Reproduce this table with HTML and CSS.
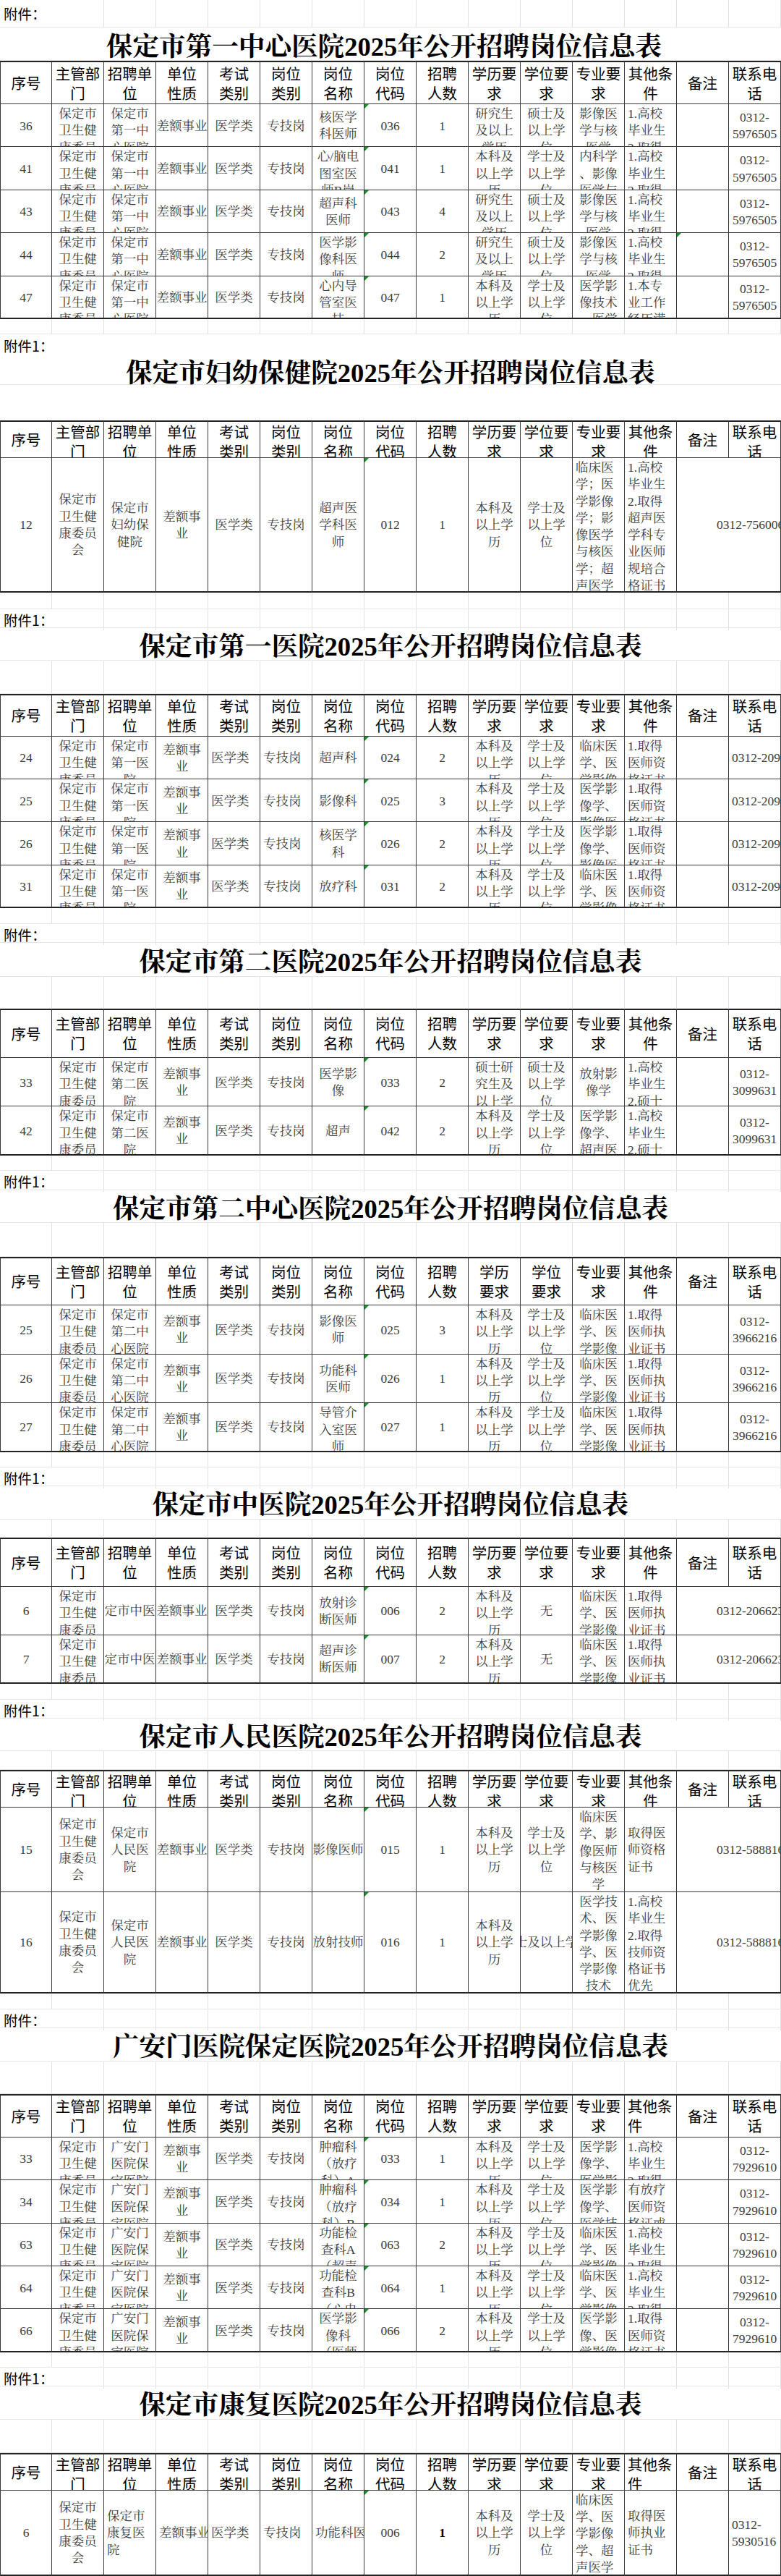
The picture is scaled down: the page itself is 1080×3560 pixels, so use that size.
FILE: index.html
```html
<!DOCTYPE html>
<html lang="zh-CN">
<head>
<meta charset="utf-8">
<title>2025年公开招聘岗位信息表</title>
<link rel="stylesheet" href="styles.css">
</head>
<body>
<div class="page">

<!-- 表1 保定市第一中心医院 -->
<div class="fj h38"><div class="fjt">附件：</div><div class="fjg"></div></div>
<div class="ti ti1 h46">保定市第一中心医院2025年公开招聘岗位信息表</div>
<div class="tr hd h60">
 <div class="c"><span>序号</span></div><div class="c"><span>主管部<br>门</span></div><div class="c"><span>招聘单<br>位</span></div><div class="c"><span>单位<br>性质</span></div><div class="c"><span>考试<br>类别</span></div><div class="c"><span>岗位<br>类别</span></div><div class="c"><span>岗位<br>名称</span></div><div class="c"><span>岗位<br>代码</span></div><div class="c"><span>招聘<br>人数</span></div><div class="c"><span>学历要<br>求</span></div><div class="c"><span>学位要<br>求</span></div><div class="c"><span>专业要<br>求</span></div><div class="c"><span>其他条<br>件</span></div><div class="c"><span>备注</span></div><div class="c"><span>联系电<br>话</span></div>
</div>
<div class="tr r594">
 <div class="c"><span>36</span></div><div class="c"><span>保定市<br>卫生健<br>康委员<br>会</span></div><div class="c"><span>保定市<br>第一中<br>心医院</span></div><div class="c"><span>差额事业</span></div><div class="c"><span>医学类</span></div><div class="c"><span>专技岗</span></div><div class="c"><span>核医学<br>科医师</span></div><div class="c g"><span>036</span></div><div class="c"><span>1</span></div><div class="c"><span>研究生<br>及以上<br>学历</span></div><div class="c"><span>硕士及<br>以上学<br>位</span></div><div class="c"><span>影像医<br>学与核<br>医学</span></div><div class="c l"><span>1.高校<br>毕业生<br>2.取得</span></div><div class="c"></div><div class="c"><span>0312-<br>5976505</span></div>
</div>
<div class="tr r594">
 <div class="c"><span>41</span></div><div class="c"><span>保定市<br>卫生健<br>康委员<br>会</span></div><div class="c"><span>保定市<br>第一中<br>心医院</span></div><div class="c"><span>差额事业</span></div><div class="c"><span>医学类</span></div><div class="c"><span>专技岗</span></div><div class="c"><span>心/脑电<br>图室医<br>师B岗</span></div><div class="c g"><span>041</span></div><div class="c"><span>1</span></div><div class="c"><span>本科及<br>以上学<br>历</span></div><div class="c"><span>学士及<br>以上学<br>位</span></div><div class="c"><span>内科学<br>、影像<br>医学与</span></div><div class="c l"><span>1.高校<br>毕业生<br>2.取得</span></div><div class="c"></div><div class="c"><span>0312-<br>5976505</span></div>
</div>
<div class="tr r594">
 <div class="c"><span>43</span></div><div class="c"><span>保定市<br>卫生健<br>康委员<br>会</span></div><div class="c"><span>保定市<br>第一中<br>心医院</span></div><div class="c"><span>差额事业</span></div><div class="c"><span>医学类</span></div><div class="c"><span>专技岗</span></div><div class="c"><span>超声科<br>医师</span></div><div class="c g"><span>043</span></div><div class="c"><span>4</span></div><div class="c"><span>研究生<br>及以上<br>学历</span></div><div class="c"><span>硕士及<br>以上学<br>位</span></div><div class="c"><span>影像医<br>学与核<br>医学</span></div><div class="c l"><span>1.高校<br>毕业生<br>2.取得</span></div><div class="c"></div><div class="c"><span>0312-<br>5976505</span></div>
</div>
<div class="tr r594">
 <div class="c"><span>44</span></div><div class="c"><span>保定市<br>卫生健<br>康委员<br>会</span></div><div class="c"><span>保定市<br>第一中<br>心医院</span></div><div class="c"><span>差额事业</span></div><div class="c"><span>医学类</span></div><div class="c"><span>专技岗</span></div><div class="c"><span>医学影<br>像科医<br>师</span></div><div class="c g"><span>044</span></div><div class="c"><span>2</span></div><div class="c"><span>研究生<br>及以上<br>学历</span></div><div class="c"><span>硕士及<br>以上学<br>位</span></div><div class="c"><span>影像医<br>学与核<br>医学</span></div><div class="c l"><span>1.高校<br>毕业生<br>2.取得</span></div><div class="c g"></div><div class="c"><span>0312-<br>5976505</span></div>
</div>
<div class="tr r594 last">
 <div class="c"><span>47</span></div><div class="c"><span>保定市<br>卫生健<br>康委员<br>会</span></div><div class="c"><span>保定市<br>第一中<br>心医院</span></div><div class="c"><span>差额事业</span></div><div class="c"><span>医学类</span></div><div class="c"><span>专技岗</span></div><div class="c"><span>心内导<br>管室医<br>技</span></div><div class="c g"><span>047</span></div><div class="c"><span>1</span></div><div class="c"><span>本科及<br>以上学<br>历</span></div><div class="c"><span>学士及<br>以上学<br>位</span></div><div class="c"><span>医学影<br>像技术<br>、医学</span></div><div class="c l"><span>1.本专<br>业工作<br>经历满</span></div><div class="c"></div><div class="c"><span>0312-<br>5976505</span></div>
</div>
<div class="bl h21"></div>

<!-- 表2 保定市妇幼保健院 -->
<div class="fjp">附件1：</div>
<div class="ti h38">保定市妇幼保健院2025年公开招聘岗位信息表</div>
<div class="h49"></div>
<div class="tr hd h52">
 <div class="c"><span>序号</span></div><div class="c"><span>主管部<br>门</span></div><div class="c"><span>招聘单<br>位</span></div><div class="c"><span>单位<br>性质</span></div><div class="c"><span>考试<br>类别</span></div><div class="c"><span>岗位<br>类别</span></div><div class="c"><span>岗位<br>名称</span></div><div class="c"><span>岗位<br>代码</span></div><div class="c"><span>招聘<br>人数</span></div><div class="c"><span>学历要<br>求</span></div><div class="c"><span>学位要<br>求</span></div><div class="c"><span>专业要<br>求</span></div><div class="c"><span>其他条<br>件</span></div><div class="c"><span>备注</span></div><div class="c"><span>联系电<br>话</span></div>
</div>
<div class="tr h186 last">
 <div class="c"><span>12</span></div><div class="c"><span>保定市<br>卫生健<br>康委员<br>会</span></div><div class="c"><span>保定市<br>妇幼保<br>健院</span></div><div class="c"><span>差额事<br>业</span></div><div class="c"><span>医学类</span></div><div class="c"><span>专技岗</span></div><div class="c"><span>超声医<br>学科医<br>师</span></div><div class="c g"><span>012</span></div><div class="c"><span>1</span></div><div class="c"><span>本科及<br>以上学<br>历</span></div><div class="c"><span>学士及<br>以上学<br>位</span></div><div class="c l"><span>临床医<br>学；医<br>学影像<br>学；影<br>像医学<br>与核医<br>学；超<br>声医学</span></div><div class="c l"><span>1.高校<br>毕业生<br>2.取得<br>超声医<br>学科专<br>业医师<br>规培合<br>格证书</span></div><div class="c m2"><span>0312-7560063</span></div>
</div>
<div class="bl h23"></div>

<!-- 表3 保定市第一医院 -->
<div class="fj h26"><div class="fjt">附件1：</div><div class="fjg"></div></div>
<div class="ti h45">保定市第一医院2025年公开招聘岗位信息表</div>
<div class="bl h46"></div>
<div class="tr hd h59">
 <div class="c"><span>序号</span></div><div class="c"><span>主管部<br>门</span></div><div class="c"><span>招聘单<br>位</span></div><div class="c"><span>单位<br>性质</span></div><div class="c"><span>考试<br>类别</span></div><div class="c"><span>岗位<br>类别</span></div><div class="c"><span>岗位<br>名称</span></div><div class="c"><span>岗位<br>代码</span></div><div class="c"><span>招聘<br>人数</span></div><div class="c"><span>学历要<br>求</span></div><div class="c"><span>学位要<br>求</span></div><div class="c"><span>专业要<br>求</span></div><div class="c"><span>其他条<br>件</span></div><div class="c"><span>备注</span></div><div class="c"><span>联系电<br>话</span></div>
</div>
<div class="tr r5925">
 <div class="c"><span>24</span></div><div class="c"><span>保定市<br>卫生健<br>康委员<br>会</span></div><div class="c"><span>保定市<br>第一医<br>院</span></div><div class="c"><span>差额事<br>业</span></div><div class="c l"><span>医学类</span></div><div class="c l"><span>专技岗</span></div><div class="c"><span>超声科</span></div><div class="c g"><span>024</span></div><div class="c"><span>2</span></div><div class="c"><span>本科及<br>以上学<br>历</span></div><div class="c"><span>学士及<br>以上学<br>位</span></div><div class="c"><span>临床医<br>学、医<br>学影像</span></div><div class="c l"><span>1.取得<br>医师资<br>格证书</span></div><div class="c"></div><div class="c l"><span>0312-2096133</span></div>
</div>
<div class="tr r5925">
 <div class="c"><span>25</span></div><div class="c"><span>保定市<br>卫生健<br>康委员<br>会</span></div><div class="c"><span>保定市<br>第一医<br>院</span></div><div class="c"><span>差额事<br>业</span></div><div class="c l"><span>医学类</span></div><div class="c l"><span>专技岗</span></div><div class="c"><span>影像科</span></div><div class="c g"><span>025</span></div><div class="c"><span>3</span></div><div class="c"><span>本科及<br>以上学<br>历</span></div><div class="c"><span>学士及<br>以上学<br>位</span></div><div class="c"><span>医学影<br>像学、<br>影像医</span></div><div class="c l"><span>1.取得<br>医师资<br>格证书</span></div><div class="c"></div><div class="c l"><span>0312-2096133</span></div>
</div>
<div class="tr r5925">
 <div class="c"><span>26</span></div><div class="c"><span>保定市<br>卫生健<br>康委员<br>会</span></div><div class="c"><span>保定市<br>第一医<br>院</span></div><div class="c"><span>差额事<br>业</span></div><div class="c l"><span>医学类</span></div><div class="c l"><span>专技岗</span></div><div class="c"><span>核医学<br>科</span></div><div class="c g"><span>026</span></div><div class="c"><span>2</span></div><div class="c"><span>本科及<br>以上学<br>历</span></div><div class="c"><span>学士及<br>以上学<br>位</span></div><div class="c"><span>医学影<br>像学、<br>影像医</span></div><div class="c l"><span>1.取得<br>医师资<br>格证书</span></div><div class="c"></div><div class="c l"><span>0312-2096133</span></div>
</div>
<div class="tr r5925 last">
 <div class="c"><span>31</span></div><div class="c"><span>保定市<br>卫生健<br>康委员<br>会</span></div><div class="c"><span>保定市<br>第一医<br>院</span></div><div class="c"><span>差额事<br>业</span></div><div class="c l"><span>医学类</span></div><div class="c l"><span>专技岗</span></div><div class="c"><span>放疗科</span></div><div class="c g"><span>031</span></div><div class="c"><span>2</span></div><div class="c"><span>本科及<br>以上学<br>历</span></div><div class="c"><span>学士及<br>以上学<br>位</span></div><div class="c"><span>临床医<br>学、医<br>学影像</span></div><div class="c l"><span>1.取得<br>医师资<br>格证书</span></div><div class="c"></div><div class="c l"><span>0312-2096133</span></div>
</div>
<div class="bl h22"></div>

<!-- 表4 保定市第二医院 -->
<div class="fj h26"><div class="fjt">附件：</div><div class="fjg"></div></div>
<div class="ti h47">保定市第二医院2025年公开招聘岗位信息表</div>
<div class="bl h44"></div>
<div class="tr hd h68">
 <div class="c"><span>序号</span></div><div class="c"><span>主管部<br>门</span></div><div class="c"><span>招聘单<br>位</span></div><div class="c"><span>单位<br>性质</span></div><div class="c"><span>考试<br>类别</span></div><div class="c"><span>岗位<br>类别</span></div><div class="c"><span>岗位<br>名称</span></div><div class="c"><span>岗位<br>代码</span></div><div class="c"><span>招聘<br>人数</span></div><div class="c"><span>学历要<br>求</span></div><div class="c"><span>学位要<br>求</span></div><div class="c"><span>专业要<br>求</span></div><div class="c"><span>其他条<br>件</span></div><div class="c"><span>备注</span></div><div class="c"><span>联系电<br>话</span></div>
</div>
<div class="tr r675">
 <div class="c"><span>33</span></div><div class="c"><span>保定市<br>卫生健<br>康委员<br>会</span></div><div class="c"><span>保定市<br>第二医<br>院</span></div><div class="c"><span>差额事<br>业</span></div><div class="c"><span>医学类</span></div><div class="c"><span>专技岗</span></div><div class="c"><span>医学影<br>像</span></div><div class="c g"><span>033</span></div><div class="c"><span>2</span></div><div class="c"><span>硕士研<br>究生及<br>以上学<br>历</span></div><div class="c"><span>硕士及<br>以上学<br>位</span></div><div class="c"><span>放射影<br>像学</span></div><div class="c l"><span>1.高校<br>毕业生<br>2.硕士</span></div><div class="c"></div><div class="c"><span>0312-<br>3099631</span></div>
</div>
<div class="tr r675 last">
 <div class="c"><span>42</span></div><div class="c"><span>保定市<br>卫生健<br>康委员<br>会</span></div><div class="c"><span>保定市<br>第二医<br>院</span></div><div class="c"><span>差额事<br>业</span></div><div class="c"><span>医学类</span></div><div class="c"><span>专技岗</span></div><div class="c"><span>超声</span></div><div class="c g"><span>042</span></div><div class="c"><span>2</span></div><div class="c"><span>本科及<br>以上学<br>历</span></div><div class="c"><span>学士及<br>以上学<br>位</span></div><div class="c"><span>医学影<br>像学、<br>超声医</span></div><div class="c l"><span>1.高校<br>毕业生<br>2.硕士</span></div><div class="c"></div><div class="c"><span>0312-<br>3099631</span></div>
</div>
<div class="bl h21"></div>

<!-- 表5 保定市第二中心医院 -->
<div class="fj h27"><div class="fjt">附件1：</div><div class="fjg"></div></div>
<div class="ti h45">保定市第二中心医院2025年公开招聘岗位信息表</div>
<div class="bl h47"></div>
<div class="tr hd h67">
 <div class="c"><span>序号</span></div><div class="c"><span>主管部<br>门</span></div><div class="c"><span>招聘单<br>位</span></div><div class="c"><span>单位<br>性质</span></div><div class="c"><span>考试<br>类别</span></div><div class="c"><span>岗位<br>类别</span></div><div class="c"><span>岗位<br>名称</span></div><div class="c"><span>岗位<br>代码</span></div><div class="c"><span>招聘<br>人数</span></div><div class="c"><span>学历<br>要求</span></div><div class="c"><span>学位<br>要求</span></div><div class="c"><span>专业要<br>求</span></div><div class="c"><span>其他条<br>件</span></div><div class="c"><span>备注</span></div><div class="c"><span>联系电<br>话</span></div>
</div>
<div class="tr r6767">
 <div class="c"><span>25</span></div><div class="c"><span>保定市<br>卫生健<br>康委员<br>会</span></div><div class="c"><span>保定市<br>第二中<br>心医院</span></div><div class="c"><span>差额事<br>业</span></div><div class="c"><span>医学类</span></div><div class="c"><span>专技岗</span></div><div class="c"><span>影像医<br>师</span></div><div class="c g"><span>025</span></div><div class="c"><span>3</span></div><div class="c"><span>本科及<br>以上学<br>历</span></div><div class="c"><span>学士及<br>以上学<br>位</span></div><div class="c"><span>临床医<br>学、医<br>学影像</span></div><div class="c l"><span>1.取得<br>医师执<br>业证书</span></div><div class="c"></div><div class="c"><span>0312-<br>3966216</span></div>
</div>
<div class="tr r6767">
 <div class="c"><span>26</span></div><div class="c"><span>保定市<br>卫生健<br>康委员<br>会</span></div><div class="c"><span>保定市<br>第二中<br>心医院</span></div><div class="c"><span>差额事<br>业</span></div><div class="c"><span>医学类</span></div><div class="c"><span>专技岗</span></div><div class="c"><span>功能科<br>医师</span></div><div class="c g"><span>026</span></div><div class="c"><span>1</span></div><div class="c"><span>本科及<br>以上学<br>历</span></div><div class="c"><span>学士及<br>以上学<br>位</span></div><div class="c"><span>临床医<br>学、医<br>学影像</span></div><div class="c l"><span>1.取得<br>医师执<br>业证书</span></div><div class="c"></div><div class="c"><span>0312-<br>3966216</span></div>
</div>
<div class="tr r6767 last">
 <div class="c"><span>27</span></div><div class="c"><span>保定市<br>卫生健<br>康委员<br>会</span></div><div class="c"><span>保定市<br>第二中<br>心医院</span></div><div class="c"><span>差额事<br>业</span></div><div class="c"><span>医学类</span></div><div class="c"><span>专技岗</span></div><div class="c"><span>导管介<br>入室医<br>师</span></div><div class="c g"><span>027</span></div><div class="c"><span>1</span></div><div class="c"><span>本科及<br>以上学<br>历</span></div><div class="c"><span>学士及<br>以上学<br>位</span></div><div class="c"><span>临床医<br>学、医<br>学影像</span></div><div class="c l"><span>1.取得<br>医师执<br>业证书</span></div><div class="c"></div><div class="c"><span>0312-<br>3966216</span></div>
</div>
<div class="bl h21"></div>

<!-- 表6 保定市中医院 -->
<div class="fj h26"><div class="fjt">附件1：</div><div class="fjg"></div></div>
<div class="ti h46">保定市中医院2025年公开招聘岗位信息表</div>
<div class="bl h25"></div>
<div class="tr hd h68">
 <div class="c"><span>序号</span></div><div class="c"><span>主管部<br>门</span></div><div class="c"><span>招聘单<br>位</span></div><div class="c"><span>单位<br>性质</span></div><div class="c"><span>考试<br>类别</span></div><div class="c"><span>岗位<br>类别</span></div><div class="c"><span>岗位<br>名称</span></div><div class="c"><span>岗位<br>代码</span></div><div class="c"><span>招聘<br>人数</span></div><div class="c"><span>学历要<br>求</span></div><div class="c"><span>学位要<br>求</span></div><div class="c"><span>专业要<br>求</span></div><div class="c"><span>其他条<br>件</span></div><div class="c"><span>备注</span></div><div class="c"><span>联系电<br>话</span></div>
</div>
<div class="tr r67">
 <div class="c"><span>6</span></div><div class="c"><span>保定市<br>卫生健<br>康委员<br>会</span></div><div class="c"><span>保定市中医院</span></div><div class="c"><span>差额事业</span></div><div class="c"><span>医学类</span></div><div class="c"><span>专技岗</span></div><div class="c"><span>放射诊<br>断医师</span></div><div class="c g"><span>006</span></div><div class="c"><span>2</span></div><div class="c"><span>本科及<br>以上学<br>历</span></div><div class="c"><span>无</span></div><div class="c"><span>临床医<br>学、医<br>学影像</span></div><div class="c l"><span>1.取得<br>医师执<br>业证书</span></div><div class="c m2"><span>0312-2066233</span></div>
</div>
<div class="tr r67 last">
 <div class="c"><span>7</span></div><div class="c"><span>保定市<br>卫生健<br>康委员<br>会</span></div><div class="c"><span>保定市中医院</span></div><div class="c"><span>差额事业</span></div><div class="c"><span>医学类</span></div><div class="c"><span>专技岗</span></div><div class="c"><span>超声诊<br>断医师</span></div><div class="c g"><span>007</span></div><div class="c"><span>2</span></div><div class="c"><span>本科及<br>以上学<br>历</span></div><div class="c"><span>无</span></div><div class="c"><span>临床医<br>学、医<br>学影像</span></div><div class="c l"><span>1.取得<br>医师执<br>业证书</span></div><div class="c m2"><span>0312-2066233</span></div>
</div>
<div class="bl h22"></div>

<!-- 表7 保定市人民医院 -->
<div class="fj h26"><div class="fjt">附件1：</div><div class="fjg"></div></div>
<div class="ti h45">保定市人民医院2025年公开招聘岗位信息表</div>
<div class="bl h26"></div>
<div class="tr hd h52">
 <div class="c"><span>序号</span></div><div class="c"><span>主管部<br>门</span></div><div class="c"><span>招聘单<br>位</span></div><div class="c"><span>单位<br>性质</span></div><div class="c"><span>考试<br>类别</span></div><div class="c"><span>岗位<br>类别</span></div><div class="c"><span>岗位<br>名称</span></div><div class="c"><span>岗位<br>代码</span></div><div class="c"><span>招聘<br>人数</span></div><div class="c"><span>学历要<br>求</span></div><div class="c"><span>学位要<br>求</span></div><div class="c"><span>专业要<br>求</span></div><div class="c"><span>其他条<br>件</span></div><div class="c"><span>备注</span></div><div class="c"><span>联系电<br>话</span></div>
</div>
<div class="tr h117">
 <div class="c"><span>15</span></div><div class="c"><span>保定市<br>卫生健<br>康委员<br>会</span></div><div class="c"><span>保定市<br>人民医<br>院</span></div><div class="c"><span>差额事业</span></div><div class="c"><span>医学类</span></div><div class="c"><span>专技岗</span></div><div class="c"><span>影像医师</span></div><div class="c g"><span>015</span></div><div class="c"><span>1</span></div><div class="c"><span>本科及<br>以上学<br>历</span></div><div class="c"><span>学士及<br>以上学<br>位</span></div><div class="c"><span>临床医<br>学、影<br>像医师<br>与核医<br>学</span></div><div class="c l"><span>取得医<br>师资格<br>证书</span></div><div class="c m2"><span>0312-5888166</span></div>
</div>
<div class="tr h140 last">
 <div class="c"><span>16</span></div><div class="c"><span>保定市<br>卫生健<br>康委员<br>会</span></div><div class="c"><span>保定市<br>人民医<br>院</span></div><div class="c"><span>差额事业</span></div><div class="c"><span>医学类</span></div><div class="c"><span>专技岗</span></div><div class="c"><span>放射技师</span></div><div class="c g"><span>016</span></div><div class="c"><span>1</span></div><div class="c"><span>本科及<br>以上学<br>历</span></div><div class="c"><span>学士及以上学位</span></div><div class="c"><span>医学技<br>术、医<br>学影像<br>学、医<br>学影像<br>技术</span></div><div class="c l"><span>1.高校<br>毕业生<br>2.取得<br>技师资<br>格证书<br>优先</span></div><div class="c m2"><span>0312-5888166</span></div>
</div>
<div class="bl h22"></div>

<!-- 表8 广安门医院保定医院 -->
<div class="fj h26"><div class="fjt">附件：</div><div class="fjg"></div></div>
<div class="ti h46">广安门医院保定医院2025年公开招聘岗位信息表</div>
<div class="bl h45"></div>
<div class="tr hd h60">
 <div class="c"><span>序号</span></div><div class="c"><span>主管部<br>门</span></div><div class="c"><span>招聘单<br>位</span></div><div class="c"><span>单位<br>性质</span></div><div class="c"><span>考试<br>类别</span></div><div class="c"><span>岗位<br>类别</span></div><div class="c"><span>岗位<br>名称</span></div><div class="c"><span>岗位<br>代码</span></div><div class="c"><span>招聘<br>人数</span></div><div class="c"><span>学历要<br>求</span></div><div class="c"><span>学位要<br>求</span></div><div class="c"><span>专业要<br>求</span></div><div class="c hl"><span>其他条<br>件</span></div><div class="c"><span>备注</span></div><div class="c"><span>联系电<br>话</span></div>
</div>
<div class="tr r594">
 <div class="c"><span>33</span></div><div class="c"><span>保定市<br>卫生健<br>康委员<br>会</span></div><div class="c"><span>广安门<br>医院保<br>定医院</span></div><div class="c"><span>差额事<br>业</span></div><div class="c"><span>医学类</span></div><div class="c"><span>专技岗</span></div><div class="c"><span>肿瘤科<br>（放疗<br>科）A</span></div><div class="c g"><span>033</span></div><div class="c"><span>1</span></div><div class="c"><span>本科及<br>以上学<br>历</span></div><div class="c"><span>学士及<br>以上学<br>位</span></div><div class="c"><span>医学影<br>像学、<br>医学影</span></div><div class="c l"><span>1.高校<br>毕业生<br>2.取得</span></div><div class="c"></div><div class="c"><span>0312-<br>7929610</span></div>
</div>
<div class="tr r594">
 <div class="c"><span>34</span></div><div class="c"><span>保定市<br>卫生健<br>康委员<br>会</span></div><div class="c"><span>广安门<br>医院保<br>定医院</span></div><div class="c"><span>差额事<br>业</span></div><div class="c"><span>医学类</span></div><div class="c"><span>专技岗</span></div><div class="c"><span>肿瘤科<br>（放疗<br>科）B</span></div><div class="c g"><span>034</span></div><div class="c"><span>1</span></div><div class="c"><span>本科及<br>以上学<br>历</span></div><div class="c"><span>学士及<br>以上学<br>位</span></div><div class="c"><span>医学影<br>像学、<br>医学技</span></div><div class="c l"><span>有放疗<br>医师资<br>格证或</span></div><div class="c"></div><div class="c"><span>0312-<br>7929610</span></div>
</div>
<div class="tr r594">
 <div class="c"><span>63</span></div><div class="c"><span>保定市<br>卫生健<br>康委员<br>会</span></div><div class="c"><span>广安门<br>医院保<br>定医院</span></div><div class="c"><span>差额事<br>业</span></div><div class="c"><span>医学类</span></div><div class="c"><span>专技岗</span></div><div class="c"><span>功能检<br>查科A<br>（超声</span></div><div class="c g"><span>063</span></div><div class="c"><span>2</span></div><div class="c"><span>本科及<br>以上学<br>历</span></div><div class="c"><span>学士及<br>以上学<br>位</span></div><div class="c"><span>临床医<br>学、医<br>学影像</span></div><div class="c l"><span>1.高校<br>毕业生<br>2.取得</span></div><div class="c"></div><div class="c"><span>0312-<br>7929610</span></div>
</div>
<div class="tr r594">
 <div class="c"><span>64</span></div><div class="c"><span>保定市<br>卫生健<br>康委员<br>会</span></div><div class="c"><span>广安门<br>医院保<br>定医院</span></div><div class="c"><span>差额事<br>业</span></div><div class="c"><span>医学类</span></div><div class="c"><span>专技岗</span></div><div class="c"><span>功能检<br>查科B<br>（心电</span></div><div class="c g"><span>064</span></div><div class="c"><span>1</span></div><div class="c"><span>本科及<br>以上学<br>历</span></div><div class="c"><span>学士及<br>以上学<br>位</span></div><div class="c"><span>临床医<br>学、医<br>学影像</span></div><div class="c l"><span>1.高校<br>毕业生<br>2.取得</span></div><div class="c"></div><div class="c"><span>0312-<br>7929610</span></div>
</div>
<div class="tr r594 last">
 <div class="c"><span>66</span></div><div class="c"><span>保定市<br>卫生健<br>康委员<br>会</span></div><div class="c"><span>广安门<br>医院保<br>定医院</span></div><div class="c"><span>差额事<br>业</span></div><div class="c"><span>医学类</span></div><div class="c"><span>专技岗</span></div><div class="c"><span>医学影<br>像科<br>（医师</span></div><div class="c g"><span>066</span></div><div class="c"><span>2</span></div><div class="c"><span>本科及<br>以上学<br>历</span></div><div class="c"><span>学士及<br>以上学<br>位</span></div><div class="c"><span>医学影<br>像、医<br>学影像</span></div><div class="c l"><span>1.取得<br>医师资<br>格证书</span></div><div class="c"></div><div class="c"><span>0312-<br>7929610</span></div>
</div>
<div class="bl h21"></div>

<!-- 表9 保定市康复医院 -->
<div class="fj h26"><div class="fjt">附件1：</div><div class="fjg"></div></div>
<div class="ti h46">保定市康复医院2025年公开招聘岗位信息表</div>
<div class="bl h46"></div>
<div class="tr hd h52">
 <div class="c"><span>序号</span></div><div class="c"><span>主管部<br>门</span></div><div class="c"><span>招聘单<br>位</span></div><div class="c"><span>单位<br>性质</span></div><div class="c"><span>考试<br>类别</span></div><div class="c"><span>岗位<br>类别</span></div><div class="c"><span>岗位<br>名称</span></div><div class="c"><span>岗位<br>代码</span></div><div class="c"><span>招聘<br>人数</span></div><div class="c"><span>学历要<br>求</span></div><div class="c"><span>学位要<br>求</span></div><div class="c"><span>专业要<br>求</span></div><div class="c hl"><span>其他条<br>件</span></div><div class="c"><span>备注</span></div><div class="c"><span>联系电<br>话</span></div>
</div>
<div class="tr h118 last">
 <div class="c"><span>6</span></div><div class="c"><span>保定市<br>卫生健<br>康委员<br>会</span></div><div class="c l"><span>保定市<br>康复医<br>院</span></div><div class="c l"><span>差额事业</span></div><div class="c l"><span>医学类</span></div><div class="c l"><span>专技岗</span></div><div class="c l"><span>功能科医师</span></div><div class="c g"><span>006</span></div><div class="c b"><span>1</span></div><div class="c"><span>本科及<br>以上学<br>历</span></div><div class="c"><span>学士及<br>以上学<br>位</span></div><div class="c l"><span>临床医<br>学、医<br>学影像<br>学、超<br>声医学</span></div><div class="c l"><span>取得医<br>师执业<br>证书</span></div><div class="c"></div><div class="c l"><span>0312-<br>5930516</span></div>
</div>

</div>
</body>
</html>
```

FILE: styles.css
```css
* { box-sizing: border-box; }

html, body {
  margin: 0;
  padding: 0;
  background: #ffffff;
  overflow-x: hidden;
}

body {
  width: 1080px;
  font-family: "Noto Sans CJK SC", "Noto Sans", sans-serif;
  color: #000;
}

.page {
  width: 1080px;
  overflow: hidden;
}

/* ---------- sheet rows outside the tables ---------- */
.bl {
  background: repeating-linear-gradient(to right, transparent 0 71px, #e1e1e1 71px 72px);
  border-bottom: 1px solid #e6e6e6;
}

.fj {
  display: grid;
  grid-template-columns: 144px 1fr;
  border-bottom: 1px solid #e6e6e6;
}

.fjt {
  display: flex;
  align-items: center;
  padding-left: 5px;
  font-family: "Noto Sans CJK SC", sans-serif;
  font-size: 19.5px;
  color: #000;
  border-right: 1px solid #e1e1e1;
  white-space: nowrap;
}

.fjg {
  background: repeating-linear-gradient(to right, transparent 0 71px, #e1e1e1 71px 72px);
}

.fjp {
  height: 32px;
  display: flex;
  align-items: center;
  padding-left: 5px;
  font-size: 19.5px;
  color: #000;
}

.ti {
  display: flex;
  align-items: center;
  justify-content: center;
  font-family: "Liberation Serif", "Noto Serif CJK SC", "Noto Sans CJK SC", serif;
  font-weight: 700;
  font-size: 36.6px;
  color: #000;
  white-space: nowrap;
  border-bottom: 1px solid #e6e6e6;
}

.ti1 { padding-right: 18px; }

/* ---------- tables ---------- */
.tr {
  display: grid;
  grid-template-columns: repeat(15, 72px);
}

.c {
  display: flex;
  justify-content: center;
  position: relative;
  overflow: hidden;
  padding: 2px 3px 0;
  border-right: 1px solid #3a3a3a;
  border-bottom: 1px solid #3a3a3a;
  font-family: "Liberation Serif", "Noto Serif CJK SC", "Noto Sans CJK SC", serif;
  font-size: 17.5px;
  line-height: 23.3px;
  color: #3c3c3c;
}

.c > span {
  margin: auto 0;
  white-space: nowrap;
  text-align: center;
}

.tr > .c:first-child { border-left: 1px solid #3a3a3a; }

.hd > .c {
  border-top: 2px solid #222;
  padding: 0 1px;
  font-family: "Noto Sans CJK SC", sans-serif;
  font-size: 20.5px;
  line-height: 27px;
  color: #000;
}

.hd > .hl { justify-content: flex-start; padding-left: 4px; }
.hd > .hl > span { text-align: left; }

.l { justify-content: flex-start; padding-left: 4px; }
.l > span { text-align: left; }

.last > .c { border-bottom: 2px solid #222; }

.m2 {
  grid-column: span 2;
  padding-left: 72px;
}

.g::before {
  content: "";
  position: absolute;
  top: 0;
  left: 0;
  border-top: 6px solid #1f8a2e;
  border-right: 6px solid transparent;
}

.b { font-weight: 700; color: #000; }

/* ---------- row heights ---------- */
.h21 { height: 21px; }
.h22 { height: 22px; }
.h23 { height: 23px; }
.h25 { height: 25px; }
.h26 { height: 26px; }
.h27 { height: 27px; }
.h38 { height: 38px; }
.h44 { height: 44px; }
.h45 { height: 45px; }
.h46 { height: 46px; }
.h47 { height: 47px; }
.h49 { height: 49px; }
.h52 { height: 52px; }
.h59 { height: 59px; }
.h60 { height: 60px; }
.h67 { height: 67px; }
.h68 { height: 68px; }
.h117 { height: 117px; }
.h118 { height: 118px; }
.h140 { height: 140px; }
.h186 { height: 186px; }
.r594 { height: 59.4px; }
.r5925 { height: 59.25px; }
.r675 { height: 67.5px; }
.r6767 { height: 67.67px; }
.r67 { height: 67px; }
```
